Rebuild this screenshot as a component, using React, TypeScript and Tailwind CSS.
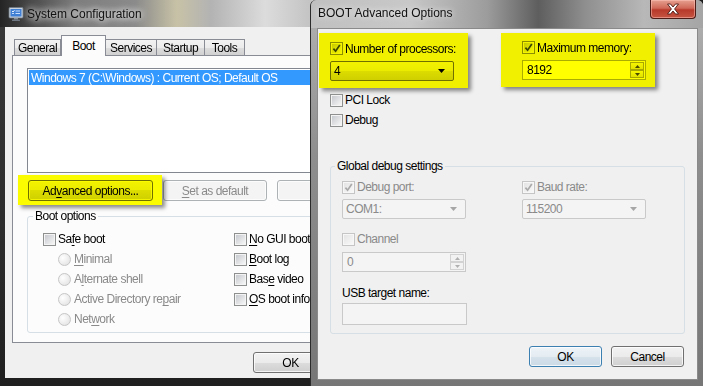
import React from "react";

type BoxProps = { checked?: boolean; disabled?: boolean };

function CheckBox({ checked = false, disabled = false }: BoxProps) {
  return (
    <span
      className={`relative flex h-[13px] w-[13px] shrink-0 items-center justify-center border ${
        disabled ? "border-[#c5c5c5] bg-[#f7f7f7]" : "border-[#8e8f8f] bg-[#f4f4f4]"
      }`}
    >
      <span
        className={`h-[9px] w-[9px] ${
          disabled ? "bg-[linear-gradient(135deg,#e4e4e4,#f8f8f8)]" : "bg-[linear-gradient(135deg,#c6c9ce,#f6f6f6)]"
        }`}
      />
      {checked && (
        <svg className="absolute left-[0px] top-[0px]" width="11" height="11" viewBox="0 0 11 11">
          <path d="M2.4 5.6 L4.6 8.2 L8.8 2" fill="none" stroke={disabled ? "#aaaaaa" : "#3a4540"} strokeWidth="1.7" />
        </svg>
      )}
    </span>
  );
}

function Radio() {
  return (
    <span className="h-[13px] w-[13px] shrink-0 rounded-full border border-[#c6c6c6] bg-[radial-gradient(circle_at_35%_35%,#ffffff,#dedede)]" />
  );
}

function U({ children }: { children: React.ReactNode }) {
  return <span className="underline decoration-1 underline-offset-[2px]">{children}</span>;
}

function Btn({
  children,
  w,
  variant = "normal",
}: {
  children: React.ReactNode;
  w: string;
  variant?: "normal" | "disabled" | "default";
}) {
  const styles = {
    normal:
      "border-[#707070] bg-[linear-gradient(180deg,#f2f2f2_0%,#ebebeb_50%,#dddddd_50%,#cfcfcf_100%)] text-black",
    disabled: "border-[#adb2b5] bg-[#f4f4f4] text-[#8a8a8a]",
    default:
      "border-[#3c7fb1] bg-[linear-gradient(180deg,#eef4f8_0%,#e4ecf2_50%,#d6e2ec_50%,#cbdae6_100%)] text-black",
  }[variant];
  return (
    <div
      className={`flex h-[21px] shrink-0 items-center justify-center rounded-[3px] border shadow-[inset_0_0_0_1px_rgba(255,255,255,0.75)] ${w} ${styles}`}
    >
      {children}
    </div>
  );
}

function Combo({ value, disabled = false }: { value: string; disabled?: boolean }) {
  return (
    <div
      className={`flex h-[20px] w-[124px] items-center justify-between rounded-[2px] border pl-[3px] pr-[8px] ${
        disabled
          ? "border-[#c9c9c9] bg-[#f4f4f4] text-[#8a8a8a]"
          : "border-[#707070] bg-[linear-gradient(180deg,#f2f2f2_0%,#ebebeb_50%,#dddddd_50%,#cfcfcf_100%)] text-black"
      }`}
    >
      <span>{value}</span>
      <svg width="7" height="4" viewBox="0 0 7 4">
        <path d="M0 0 H7 L3.5 4 Z" fill={disabled ? "#a6a6a6" : "#000"} />
      </svg>
    </div>
  );
}

function SpinArrow({ up, disabled }: { up: boolean; disabled: boolean }) {
  return (
    <div
      className={`flex flex-1 items-center justify-center border ${
        disabled ? "border-[#d2d2d2] bg-[#f2f2f2]" : "border-[#a9a9a9] bg-[linear-gradient(180deg,#f7f7f7,#e2e2e2)]"
      }`}
    >
      <svg width="5" height="3" viewBox="0 0 5 3">
        <path d={up ? "M0 3 L2.5 0 L5 3 Z" : "M0 0 L2.5 3 L5 0 Z"} fill={disabled ? "#b0b0b0" : "#4a4a4a"} />
      </svg>
    </div>
  );
}

function Spin({ value, disabled = false }: { value: string; disabled?: boolean }) {
  return (
    <div
      className={`flex h-[20px] w-[124px] items-stretch border ${
        disabled ? "border-[#c9c9c9] bg-[#f4f4f4] text-[#8a8a8a]" : "border-[#abadb3] bg-white text-black"
      }`}
    >
      <span className="flex flex-1 items-center pl-[4px]">{value}</span>
      <div className="flex w-[16px] flex-col p-[1px]">
        <SpinArrow up disabled={disabled} />
        <SpinArrow up={false} disabled={disabled} />
      </div>
    </div>
  );
}

function Highlight({ className, children }: { className: string; children: React.ReactNode }) {
  return (
    <div className={`relative shrink-0 shadow-[3px_3px_4px_rgba(0,0,0,0.45)] ${className}`}>
      {children}
      <div className="pointer-events-none absolute inset-0 bg-[#ffff00] mix-blend-multiply" />
    </div>
  );
}

function Row({ children, className = "" }: { children: React.ReactNode; className?: string }) {
  return <div className={`flex h-[20px] items-center ${className}`}>{children}</div>;
}

function MsconfigIcon() {
  return (
    <svg width="16" height="16" viewBox="0 0 16 16">
      <rect x="1" y="1.5" width="14" height="10.5" rx="1" fill="#c9d2dc" stroke="#6b7683" strokeWidth="0.8" />
      <rect x="2.5" y="3" width="11" height="7.5" fill="#3f7fd4" />
      <path d="M4 5 L5 6 L6.5 4.2" fill="none" stroke="#fff" strokeWidth="0.9" />
      <path d="M7.5 5 H12 M7.5 7.5 H12 M4 7.5 H6" stroke="#d8e8ff" strokeWidth="0.9" />
      <rect x="6" y="12" width="4" height="1.5" fill="#8a939e" />
      <rect x="4" y="13.5" width="8" height="1.5" rx="0.5" fill="#6f7882" />
    </svg>
  );
}

function CloseGlyph() {
  return (
    <svg width="14" height="12" viewBox="0 0 14 12">
      <path
        d="M1.5 1 H4.5 L7 4 L9.5 1 H12.5 L8.6 6 L12.5 11 H9.5 L7 8 L4.5 11 H1.5 L5.4 6 Z"
        fill="#ffffff"
        stroke="#4b1712"
        strokeWidth="0.9"
      />
    </svg>
  );
}

const tabBase =
  "flex h-[17px] items-center justify-center border border-b-0 border-[#898c95] bg-[linear-gradient(180deg,#f2f2f2_0%,#ebebeb_50%,#dddddd_50%,#cfcfcf_100%)]";

function SystemConfiguration() {
  return (
    <div className="absolute left-0 top-0 flex h-[386px] w-[340px] flex-col bg-[linear-gradient(180deg,#3a3a3a,#2c2c2c_60%,#1f1f1f)]">
      {/* title bar */}
      <div className="flex h-[27px] items-center gap-[3px] bg-[linear-gradient(90deg,#242424_0%,#3d3d3d_6%,#7d7d7d_22%,#8b8b8b_40%,#c7c2a6_52%,#b3b3b3_62%,#dcdcdc_78%,#c2c2c2_92%,#8a8a8a_100%)] pl-[8px]">
        <MsconfigIcon />
        <span className="tracking-normal text-[12px] text-[#111] [text-shadow:0_0_6px_#ffffff,0_0_10px_#ffffff]">
          System Configuration
        </span>
      </div>

      {/* client */}
      <div className="ml-[5px] flex h-[351px] w-[330px] flex-col bg-[#f0f0f0]">
        <div className="flex h-[29px] items-end pl-[9px] pt-[8px]">
          <div className={`${tabBase} w-[47px]`}>General</div>
          <div className="relative z-10 flex h-[21px] w-[45px] items-start justify-center border border-b-0 border-[#898c95] bg-[#fcfcfc] pt-[3px]">
            Boot
          </div>
          <div className={`${tabBase} w-[51px] border-l-0`}>Services</div>
          <div className={`${tabBase} w-[48px] border-l-0`}>Startup</div>
          <div className={`${tabBase} w-[40px] border-l-0`}>Tools</div>
        </div>

        <div className="ml-[7px] -mt-px flex h-[288px] w-[316px] flex-col border border-[#898c95] bg-[#fcfcfc]">
          <div className="ml-[14px] mt-[12px] h-[105px] w-[300px] border border-[#828790] bg-white p-[1px]">
            <div className="flex h-[15px] items-center bg-[#3399ff] pl-[2px] text-white">
              Windows 7 (C:\Windows) : Current OS; Default OS
            </div>
          </div>

          <div className="mt-[2px] flex items-start">
            <Highlight className="ml-[5px] h-[30px] w-[144px] pl-[10px] pt-[5px]">
              <Btn w="w-[125px]">
                Ad<U>v</U>anced options...
              </Btn>
            </Highlight>
            <div className="ml-[1px] mt-[5px] flex gap-[10px]">
              <Btn w="w-[104px]" variant="disabled">
                <U>S</U>et as default
              </Btn>
              <Btn w="w-[104px]" variant="disabled">
                <U>D</U>elete
              </Btn>
            </div>
          </div>

          <fieldset className="ml-[14px] mt-[5px] w-[300px] rounded-[3px] border border-[#d5dfe5] pb-[3px]">
            <legend className="ml-[5px] px-[2px] leading-[12px]">Boot options</legend>
            <div className="mt-[7px] flex pl-[15px]">
              <div className="flex w-[191px] flex-col">
                <Row className="gap-[2px]">
                  <CheckBox />
                  <span>
                    Sa<U>f</U>e boot
                  </span>
                </Row>
                {[
                  <>
                    <U>M</U>inimal
                  </>,
                  <>
                    A<U>l</U>ternate shell
                  </>,
                  <>
                    Active Directory re<U>p</U>air
                  </>,
                  <>
                    Net<U>w</U>ork
                  </>,
                ].map((label, i) => (
                  <Row key={i} className="gap-[3px] pl-[15px] text-[#8a8a8a]">
                    <Radio />
                    <span>{label}</span>
                  </Row>
                ))}
              </div>
              <div className="flex flex-col">
                <Row className="gap-[2px]">
                  <CheckBox />
                  <span className="whitespace-nowrap">
                    <U>N</U>o GUI boot
                  </span>
                </Row>
                <Row className="gap-[2px]">
                  <CheckBox />
                  <span>
                    <U>B</U>oot log
                  </span>
                </Row>
                <Row className="gap-[2px]">
                  <CheckBox />
                  <span>
                    Bas<U>e</U> video
                  </span>
                </Row>
                <Row className="gap-[2px]">
                  <CheckBox />
                  <span className="whitespace-nowrap">
                    <U>O</U>S boot info
                  </span>
                </Row>
              </div>
            </div>
          </fieldset>
        </div>

        <div className="ml-[248px] mt-[9px]">
          <Btn w="w-[75px]">OK</Btn>
        </div>
      </div>
    </div>
  );
}

function AdvancedOptions() {
  return (
    <div className="absolute left-[310px] top-0 flex h-[386px] w-[393px] flex-col rounded-t-[6px] border-l border-[#2b2b2b] bg-[linear-gradient(180deg,#b3b3b3,#8e8e8e_40%,#767676)]">
      {/* title bar */}
      <div className="flex h-[28px] items-start justify-between rounded-t-[6px] bg-[linear-gradient(90deg,#c0c0c0_0%,#c8c8c8_25%,#9c9c9c_45%,#5e5e5e_58%,#8f8f8f_70%,#b8b8b8_85%,#a5a5a5_100%)] pl-[7px] pr-[7px]">
        <span className="pt-[6px] text-[12px] tracking-normal text-[#111] [text-shadow:0_0_6px_#ffffff]">
          BOOT Advanced Options
        </span>
        <div className="flex h-[19px] w-[46px] items-center justify-center rounded-b-[4px] border border-t-0 border-[#4e1c16] bg-[linear-gradient(180deg,#e6a08f_0%,#d0695a_45%,#b8392a_55%,#c55542_100%)] shadow-[inset_0_0_0_1px_rgba(255,200,190,0.5)]">
          <CloseGlyph />
        </div>
      </div>

      {/* client */}
      <div className="ml-[6px] flex h-[352px] w-[381px] flex-col border border-[#8a8a8a] bg-[#f0f0f0]">
        <div className="flex pt-[4px]">
          <Highlight className="ml-[1px] h-[55px] w-[149px] pl-[11px] pt-[7px]">
            <div className="flex h-[17px] items-center gap-[2px]">
              <CheckBox checked />
              <span>Number of processors:</span>
            </div>
            <div className="mt-[4px]">
              <Combo value="4" />
            </div>
          </Highlight>
          <Highlight className="ml-[33px] h-[54px] w-[154px] pl-[21px] pt-[6px]">
            <div className="flex h-[17px] items-center gap-[2px]">
              <CheckBox checked />
              <span>Maximum memory:</span>
            </div>
            <div className="mt-[4px]">
              <Spin value="8192" />
            </div>
          </Highlight>
        </div>

        <div className="mt-[2px] flex flex-col pl-[12px]">
          <Row className="gap-[2px]">
            <CheckBox />
            <span>PCI Lock</span>
          </Row>
          <Row className="gap-[2px]">
            <CheckBox />
            <span>Debug</span>
          </Row>
        </div>

        <fieldset className="ml-[12px] mt-[30px] w-[355px] rounded-[3px] border border-[#d5dfe5] pb-[8px]">
          <legend className="ml-[4px] px-[2px] leading-[12px]">Global debug settings</legend>
          <div className="flex flex-col pl-[11px]">
            <div className="mt-[5px] grid grid-cols-[180px_1fr] text-[#8a8a8a]">
              <Row className="gap-[2px]">
                <CheckBox checked disabled />
                <span>Debug port:</span>
              </Row>
              <Row className="gap-[2px]">
                <CheckBox checked disabled />
                <span>Baud rate:</span>
              </Row>
              <div className="mt-[2px]">
                <Combo value="COM1:" disabled />
              </div>
              <div className="mt-[2px]">
                <Combo value="115200" disabled />
              </div>
            </div>
            <Row className="mt-[10px] gap-[2px] text-[#8a8a8a]">
              <CheckBox disabled />
              <span>Channel</span>
            </Row>
            <div className="mt-[3px]">
              <Spin value="0" disabled />
            </div>
            <div className="mt-[13px] flex h-[16px] items-center">USB target name:</div>
            <div className="mt-[2px] h-[22px] w-[125px] border border-[#c9c9c9] bg-[#f4f4f4]" />
          </div>
        </fieldset>

        <div className="mt-[12px] flex justify-end gap-[9px] pr-[13px]">
          <Btn w="w-[73px]" variant="default">
            OK
          </Btn>
          <Btn w="w-[73px]">Cancel</Btn>
        </div>
      </div>
    </div>
  );
}

export default function App() {
  return (
    <div className="relative h-[386px] w-[703px] overflow-hidden bg-[#1c1c1c] font-['Liberation_Sans',Arial,sans-serif] text-[12px] leading-[14px] tracking-[-0.5px] text-black">
      <SystemConfiguration />
      <AdvancedOptions />
    </div>
  );
}
